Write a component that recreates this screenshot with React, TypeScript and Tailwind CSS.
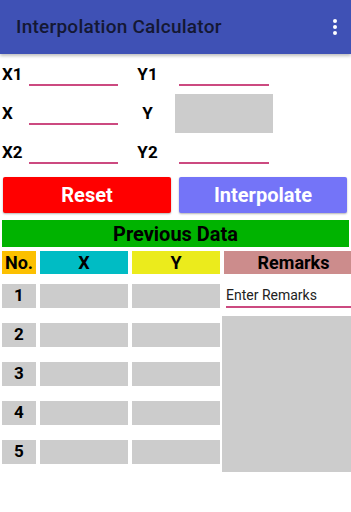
import { useState } from 'react'

const font = { fontFamily: 'Roboto, "Liberation Sans", sans-serif' }

function Line({ className = '' }: { className?: string }) {
  return <div className={`shrink-0 h-[20px] border-b-2 border-[#cc4a80] ${className}`} />
}

export default function App() {
  const [remarks, setRemarks] = useState('')
  const rows = [1, 2, 3, 4, 5]

  return (
    <div className="w-[351px] h-[512px] bg-white overflow-hidden" style={font}>
      <header className="h-[54px] bg-[#3f51b5] shadow-[0_2px_3px_rgba(0,0,0,0.25)] flex items-center justify-between pl-[16px] pr-[14px]">
        <h1 className="text-[19px] font-medium text-[#141833] tracking-[0.25px]">Interpolation Calculator</h1>
        <div className="flex flex-col gap-[2px] items-center">
          <span className="w-[4px] h-[4px] rounded-full bg-white" />
          <span className="w-[4px] h-[4px] rounded-full bg-white" />
          <span className="w-[4px] h-[4px] rounded-full bg-white" />
        </div>
      </header>

      <section className="pt-[2px] text-[17px] font-bold text-black">
        <div className="h-[38px] flex items-center">
          <span className="shrink-0 w-[29px] pl-[2px]">X1</span>
          <Line className="w-[89px] mt-[2px]" />
          <span className="shrink-0 w-[55px] ml-[2px] text-center">Y1</span>
          <Line className="w-[90px] ml-[4px] mt-[2px]" />
        </div>
        <div className="h-[39px] flex items-center">
          <span className="shrink-0 w-[29px] pl-[2px]">X</span>
          <Line className="w-[89px] mt-[2px]" />
          <span className="shrink-0 w-[55px] ml-[2px] text-center">Y</span>
          <div className="shrink-0 w-[98px] h-[39px] bg-[#cccccc]" />
        </div>
        <div className="h-[39px] flex items-center">
          <span className="shrink-0 w-[29px] pl-[2px]">X2</span>
          <Line className="w-[89px] mt-[2px]" />
          <span className="shrink-0 w-[55px] ml-[2px] text-center">Y2</span>
          <Line className="w-[90px] ml-[4px] mt-[2px]" />
        </div>
      </section>

      <div className="mt-[5px] flex gap-[8px] px-[3px]">
        <button className="w-[168px] h-[36px] rounded-[2px] bg-[#ff0000] text-white text-[20px] font-bold shadow-[0_1px_2px_rgba(0,0,0,0.3)]">
          Reset
        </button>
        <button className="w-[168px] h-[36px] rounded-[2px] bg-[#7474f8] text-white text-[20px] font-bold shadow-[0_1px_2px_rgba(0,0,0,0.3)]">
          Interpolate
        </button>
      </div>

      <div className="mt-[7px] mx-[2px] w-[347px] h-[27px] bg-[#00b300] flex items-center justify-center text-[20px] font-bold text-black">
        Previous Data
      </div>

      <div className="mt-[4px] flex h-[23px] text-[18px] font-bold text-black">
        <div className="ml-[2px] w-[34px] bg-[#fcc000] flex items-center justify-center">No.</div>
        <div className="ml-[4px] w-[88px] bg-[#00bcc4] flex items-center justify-center">X</div>
        <div className="ml-[4px] w-[88px] bg-[#ebeb1c] flex items-center justify-center">Y</div>
        <div className="ml-[4px] flex-1 bg-[#cc8c8c] flex items-center justify-center pl-[12px]">Remarks</div>
      </div>

      <div className="mt-[10px] flex">
        <div className="flex flex-col gap-[15px]">
          {rows.map((n) => (
            <div key={n} className="flex h-[24px]">
              <div className="ml-[2px] w-[34px] bg-[#cccccc] flex items-center justify-center text-[17px] font-bold text-black">
                {n}
              </div>
              <div className="ml-[4px] w-[88px] bg-[#cccccc]" />
              <div className="ml-[4px] w-[88px] bg-[#cccccc]" />
            </div>
          ))}
        </div>
        <div className="ml-[2px] flex-1 flex flex-col">
          <input
            value={remarks}
            onChange={(e) => setRemarks(e.target.value)}
            placeholder="Enter Remarks"
            className="ml-[4px] h-[24px] border-b-2 border-[#cc4a80] text-[14px] text-[#222] placeholder:text-[#222] outline-none"
          />
          <div className="mt-[8px] h-[156px] bg-[#cccccc]" />
        </div>
      </div>
    </div>
  )
}
